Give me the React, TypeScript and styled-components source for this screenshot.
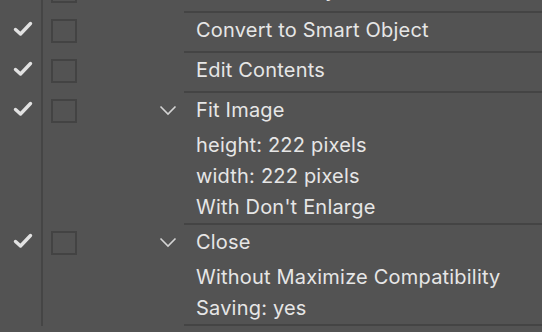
import React from 'react'
import styled, { createGlobalStyle } from 'styled-components'

const GlobalStyle = createGlobalStyle`
  html, body {
    margin: 0;
    padding: 0;
    background: #535353;
    overflow: hidden;
  }
  body {
    width: 542px;
    height: 332px;
    font-family: Inter, "Noto Sans", "Liberation Sans", sans-serif;
  }
`

const Panel = styled.div`
  width: 542px;
  height: 332px;
  overflow: hidden;
  background: #535353;
`

// list is scrolled a little, the first row is cut at the top
const List = styled.div`
  display: flex;
  flex-direction: column;
  margin-top: -29px;
`

const Row = styled.div`
  display: grid;
  grid-template-columns: 41px 2px 117px 24px 1fr;

  &:last-child > div:last-child {
    border-bottom: 2px solid #444444;
  }
`

const CheckCell = styled.div`
  display: flex;
  justify-content: center;
  padding-top: 10px;
  padding-left: 5px;
`

const Divider = styled.div`
  background: #454545;
`

const BoxCell = styled.div`
  padding: 8px 0 0 8px;
`

const Box = styled.div`
  width: 22px;
  height: 20px;
  border: 2px solid #434343;
`

const ChevronCell = styled.div`
  padding: 14px 0 0 0;
  margin-left: -1px;

  svg {
    display: block;
  }
`

const Content = styled.div<{ $single?: boolean }>`
  border-top: 2px solid #444444;
  padding-bottom: ${({ $single }) => ($single ? '3px' : '0')};
  color: #e6e6e6;
`

const Title = styled.div`
  height: 35px;
  line-height: 35px;
  padding-left: 12px;
  font-size: 20px;
  letter-spacing: 0.2px;
  white-space: nowrap;
`

const Details = styled.div`
  padding-top: 2px;
`

const Detail = styled.div`
  height: 31px;
  line-height: 31px;
  padding-left: 12px;
  font-size: 20px;
  letter-spacing: 0.2px;
  white-space: nowrap;
`

const Check = () => (
  <svg width="20" height="16" viewBox="0 0 20 16">
    <path d="M2.5 8.5 L7.5 13 L17.5 2.5" fill="none" stroke="#e2e2e2" strokeWidth="3.4" strokeLinecap="round" strokeLinejoin="round" />
  </svg>
)

const Chevron = () => (
  <svg width="18" height="11" viewBox="0 0 18 11">
    <path d="M1.5 1.5 L9 9 L16.5 1.5" fill="none" stroke="#d4d4d4" strokeWidth="1.6" />
  </svg>
)

type Step = {
  title: string
  checked: boolean
  details?: string[]
}

const steps: Step[] = [
  { title: 'Set current layer', checked: true },
  { title: 'Convert to Smart Object', checked: true },
  { title: 'Edit Contents', checked: true },
  { title: 'Fit Image', checked: true, details: ['height: 222 pixels', 'width: 222 pixels', "With Don't Enlarge"] },
  { title: 'Close', checked: true, details: ['Without Maximize Compatibility', 'Saving: yes'] },
]

const App = () => {
  return (
    <Panel>
      <GlobalStyle />
      <List>
        {steps.map((s) => (
          <Row key={s.title}>
            <CheckCell>{s.checked && <Check />}</CheckCell>
            <Divider />
            <BoxCell>
              <Box />
            </BoxCell>
            <ChevronCell>{s.details && <Chevron />}</ChevronCell>
            <Content $single={!s.details}>
              <Title>{s.title}</Title>
              {s.details && (
                <Details>
                  {s.details.map((d) => (
                    <Detail key={d}>{d}</Detail>
                  ))}
                </Details>
              )}
            </Content>
          </Row>
        ))}
      </List>
    </Panel>
  )
}

export default App
